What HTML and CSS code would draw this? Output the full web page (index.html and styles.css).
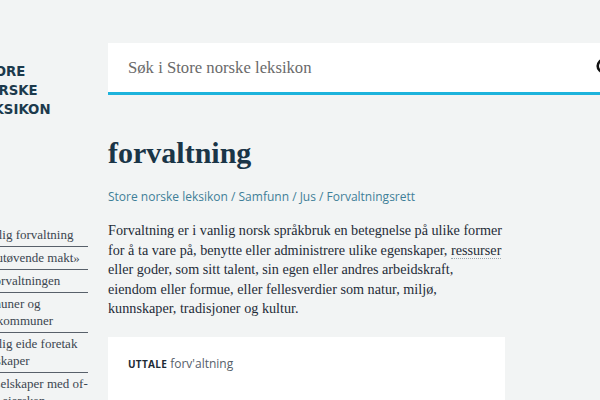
FILE: index.html
```html
<!DOCTYPE html>
<html lang="no">
<head>
<meta charset="utf-8">
<title>forvaltning – Store norske leksikon</title>
<link rel="stylesheet" href="styles.css">
</head>
<body>
<div class="page">
  <div class="logo">STORE<br>NORSKE<br>LEKSIKON</div>
  <div class="search">
    <span class="placeholder">Søk i Store norske leksikon</span>
    <svg class="search-icon" width="20" height="20" viewBox="0 0 20 20" aria-hidden="true">
      <circle cx="8" cy="8" r="6.3" fill="none" stroke="#111" stroke-width="2.6"/>
      <line x1="12.6" y1="12.6" x2="18" y2="18" stroke="#111" stroke-width="2.8" stroke-linecap="round"/>
    </svg>
  </div>
  <nav class="sidebar">
    <ul class="toc">
      <li>Offentlig forvaltning</li>
      <li>«Den utøvende makt»</li>
      <li>Statsforvaltningen</li>
      <li>Kommuner og fylkeskommuner</li>
      <li>Offentlig eide foretak og selskaper</li>
      <li>Aksjeselskaper med of&shy;fentlig eierskap</li>
    </ul>
  </nav>
  <main class="article">
    <h1 class="title">forvaltning</h1>
    <div class="crumbs">Store norske leksikon / Samfunn / Jus / Forvaltningsrett</div>
    <p class="lead">Forvaltning er i vanlig norsk språkbruk en betegnelse på ulike former for å ta vare på, benytte eller administrere ulike egenskaper, <a class="link">ressurser</a> eller goder, som sitt talent, sin egen eller andres arbeidskraft, eiendom eller formue, eller fellesverdier som natur, miljø, kunnskaper, tradisjoner og kultur.</p>
    <div class="facts"><span class="facts-label">UTTALE</span> forv'altning</div>
  </main>
</div>
</body>
</html>
```
FILE: styles.css
```css
html, body {
  margin: 0;
  padding: 0;
}
body {
  background: #f2f4f4;
  overflow: hidden;
  width: 600px;
  height: 400px;
}
.page {
  display: grid;
  grid-template-columns: 123px 526px;
  grid-template-rows: 52px auto;
  column-gap: 20px;
  margin-left: -35px;
  padding-top: 43px;
}
.logo {
  grid-column: 1;
  grid-row: 1;
  margin-top: 19px;
  margin-left: 11px;
  font-family: "DejaVu Sans", sans-serif;
  font-weight: 700;
  font-size: 13.3px;
  line-height: 19px;
  letter-spacing: 0;
  color: #1c3a4c;
  white-space: nowrap;
}
.search {
  grid-column: 2;
  grid-row: 1;
  height: 49px;
  background: #ffffff;
  border-bottom: 3px solid #1db3dc;
  display: flex;
  align-items: center;
  justify-content: space-between;
  padding: 0 18px 0 20px;
  box-sizing: content-box;
}
.placeholder {
  font-family: "Liberation Serif", serif;
  font-size: 16.7px;
  color: #6a6a6a;
}
.search-icon {
  display: block;
}
.sidebar {
  grid-column: 1;
  grid-row: 2;
  margin-top: 129px;
}
.toc {
  list-style: none;
  margin: 0;
  padding: 0;
}
.toc li {
  font-family: "Liberation Serif", serif;
  font-size: 13px;
  line-height: 17px;
  color: #3b4650;
  padding: 2px 0 3px;
  border-bottom: 1px solid #58606a;
  hyphens: manual;
}
.article {
  grid-column: 2;
  grid-row: 2;
  width: 397px;
}
.title {
  margin: 40px 0 0;
  font-family: "Liberation Serif", serif;
  font-weight: 700;
  font-size: 30px;
  line-height: 36px;
  color: #1a3547;
}
.crumbs {
  margin-top: 17px;
  font-family: "Open Sans", sans-serif;
  font-size: 12px;
  line-height: 18px;
  color: #3f7f98;
}
.lead {
  margin: 15px 0 0;
  font-family: "Liberation Serif", serif;
  font-size: 14.2px;
  line-height: 19.5px;
  color: #1f2c38;
}
.link {
  color: inherit;
  text-decoration: none;
  border-bottom: 1px dotted #9aa6ae;
}
.facts {
  margin-top: 18px;
  background: #ffffff;
  padding: 20px 20px 30px;
  font-family: "Open Sans", sans-serif;
  font-size: 12px;
  line-height: 14px;
  color: #55606a;
}
.facts-label {
  font-size: 10px;
  font-weight: 700;
  letter-spacing: 0.3px;
  color: #1c2a35;
}
```
